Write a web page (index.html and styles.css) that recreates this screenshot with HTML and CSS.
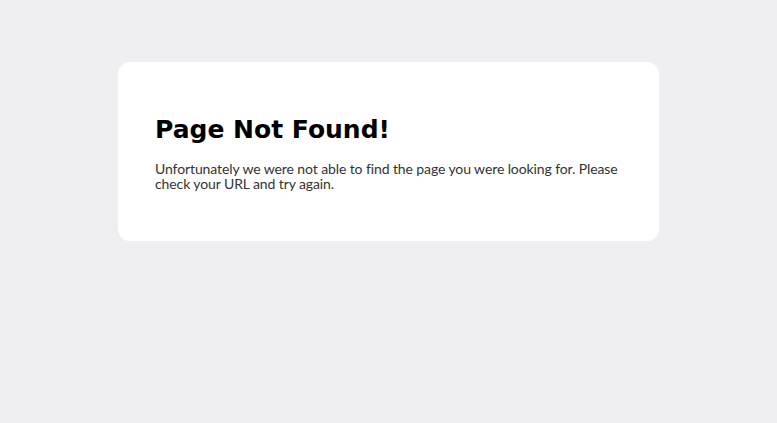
FILE: index.html
```html
<!DOCTYPE html>
<html>

<head>
  <meta charset="UTF-8">
  <link rel="stylesheet" href="styles.css">
</head>

<body>
  <div class="card">
    <h1 class="title">Page Not Found!</h1>
    <p class="text">Unfortunately we were not able to find the page you were looking for. Please check your URL and try again.</p>
  </div>
</body>

</html>
```

FILE: styles.css
```css
html {
    box-sizing: border-box;
    font-family: 'DejaVu Sans', sans-serif;
}

*, ::before, ::after {
    box-sizing: inherit;
}

body {
    margin: 0;
    min-height: 100vh;
    background-color: #efeff1;
    display: flex;
    flex-direction: column;
    align-items: center;
    padding-top: 62px;
}

.card {
    width: 541px;
    height: 179px;
    padding: 49px 37px 0;
    background-color: #fff;
    border-radius: 12px;
}

.title {
    margin: 0 0 12px;
    font-size: 25px;
    font-weight: bold;
    line-height: 38px;
    color: #000;
}

.text {
    margin: 0 -6px 0 0;
    font-family: 'Lato', sans-serif;
    font-size: 14px;
    font-weight: 400;
    letter-spacing: -0.1px;
    line-height: 15px;
    color: #333;
}
```
